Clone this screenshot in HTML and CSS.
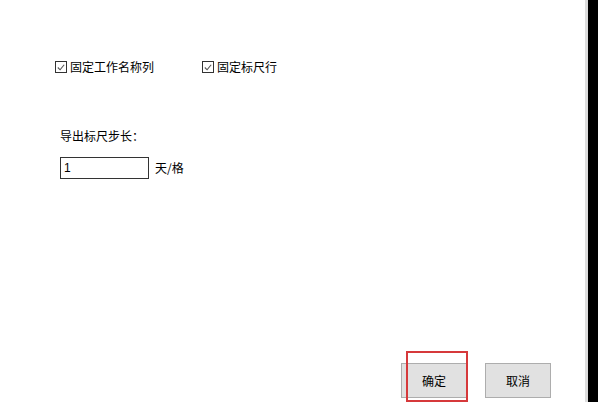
FILE: index.html
```html
<!DOCTYPE html>
<html>
<head>
<meta charset="utf-8">
<link rel="stylesheet" href="styles.css">
</head>
<body>
<div class="window">
  <div class="panel">
    <div class="checks">
      <label class="check first">
        <span class="box"><svg width="11" height="11" viewBox="0 0 11 11"><path d="M2 5.5 L4.5 8 L9 2.5" fill="none" stroke="#555" stroke-width="1.2"/></svg></span>
        <span class="text">固定工作名称列</span>
      </label>
      <label class="check">
        <span class="box"><svg width="11" height="11" viewBox="0 0 11 11"><path d="M2 5.5 L4.5 8 L9 2.5" fill="none" stroke="#555" stroke-width="1.2"/></svg></span>
        <span class="text">固定标尺行</span>
      </label>
    </div>
    <div class="step">
      <div class="step-label">导出标尺步长：</div>
      <div class="step-row">
        <div class="input">1</div>
        <span class="unit">天/格</span>
      </div>
    </div>
    <div class="spacer"></div>
    <div class="buttons">
      <div class="btn ok">确定<span class="highlight"></span></div>
      <div class="btn">取消</div>
    </div>
  </div>
  <div class="edge"></div>
  <div class="dark"></div>
</div>
</body>
</html>
```
FILE: styles.css
```css
html, body {
  margin: 0;
  padding: 0;
  background: #ffffff;
}
body {
  font-family: "Noto Sans CJK SC", "Noto Sans", sans-serif;
  font-size: 12px;
  color: #000;
}
.window {
  display: flex;
  width: 598px;
  height: 402px;
  overflow: hidden;
}
.panel {
  width: 585px;
  display: flex;
  flex-direction: column;
  background: #fff;
}
.edge {
  width: 3px;
  background: #dcdcdc;
}
.dark {
  flex: 1;
  background: #000;
}
.checks {
  display: flex;
  margin-top: 60px;
  padding-left: 55px;
  height: 14px;
  align-items: center;
}
.check {
  display: flex;
  align-items: center;
  line-height: 14px;
}
.check.first {
  width: 147px;
}
.box {
  width: 10px;
  height: 10px;
  border: 1px solid #333;
  display: inline-flex;
  align-items: center;
  justify-content: center;
  margin-right: 3px;
  background: #fff;
}
.box svg {
  display: block;
}
.text {
  white-space: nowrap;
}
.step {
  margin-top: 54px;
  padding-left: 60px;
}
.step-label {
  line-height: 16px;
  height: 16px;
}
.step-row {
  display: flex;
  align-items: center;
  margin-top: 13px;
}
.input {
  width: 84px;
  height: 20px;
  border: 1px solid #333;
  line-height: 20px;
  padding-left: 3px;
  font-family: "Liberation Sans", sans-serif;
  font-size: 12px;
}
.unit {
  margin-left: 6px;
  line-height: 16px;
}
.spacer {
  flex: 1;
}
.buttons {
  display: flex;
  gap: 18px;
  justify-content: flex-end;
  padding-right: 34px;
  margin-bottom: 4px;
}
.btn {
  position: relative;
  width: 64px;
  height: 33px;
  border: 1px solid #adadad;
  background: #e1e1e1;
  display: flex;
  align-items: center;
  justify-content: center;
}
.highlight {
  position: absolute;
  left: 4px;
  top: -13px;
  width: 58px;
  height: 47px;
  border: 2px solid #d6393b;
}
```
